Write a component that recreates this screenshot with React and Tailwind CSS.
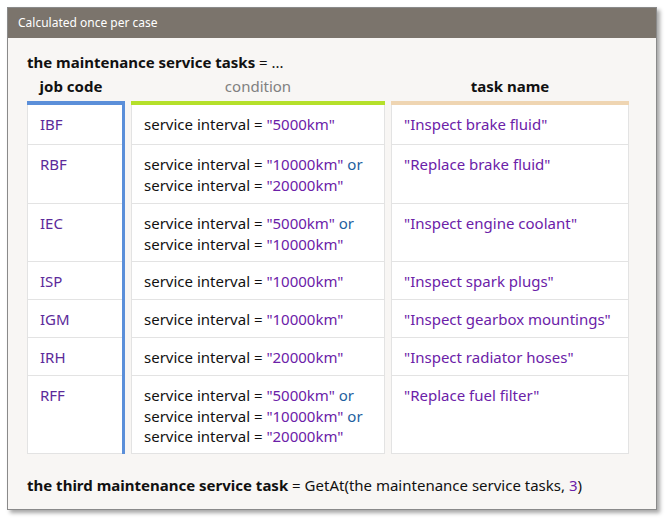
const rows = [
  { code: 'IBF', cond: ['5000km'], task: 'Inspect brake fluid', h: 'h-[40px]' },
  { code: 'RBF', cond: ['10000km', '20000km'], task: 'Replace brake fluid', h: 'h-[59px]' },
  { code: 'IEC', cond: ['5000km', '10000km'], task: 'Inspect engine coolant', h: 'h-[58px]' },
  { code: 'ISP', cond: ['10000km'], task: 'Inspect spark plugs', h: 'h-[38px]' },
  { code: 'IGM', cond: ['10000km'], task: 'Inspect gearbox mountings', h: 'h-[38px]' },
  { code: 'IRH', cond: ['20000km'], task: 'Inspect radiator hoses', h: 'h-[38px]' },
  { code: 'RFF', cond: ['5000km', '10000km', '20000km'], task: 'Replace fuel filter', h: 'h-[78px]' },
]

const Str = ({ children }) => <span className="text-[#6b21a8]">"{children}"</span>

export default function App() {
  return (
    <div className="w-[667px] h-[523px] bg-white pt-[7px] pl-[7px] font-['Noto_Sans',sans-serif]">
      <div className="w-[650px] h-[503px] border border-[#8a8a8a] bg-[#f8f6f4] shadow-[3px_3px_4px_rgba(0,0,0,0.35)]">
        <div className="h-[30px] bg-[#7b746c] text-white text-[12px] pl-[10px] flex items-center">Calculated once per case</div>
        <div className="pl-[19px] pt-[13px] text-[15px] text-[#111]">
          <div className="leading-[22px]"><b>the maintenance service tasks</b> = ...</div>
          <div className="flex gap-[6px] mt-[3px]">
            <div className="w-[98px] text-center font-bold leading-[20px] pr-[10px]">job code</div>
            <div className="w-[254px] text-center text-[#808080] leading-[20px]">condition</div>
            <div className="w-[238px] text-center font-bold leading-[20px]">task name</div>
          </div>
          <div className="flex gap-[6px] mt-[5px]">
            <div className="w-[98px] h-[4px] bg-[#5b8fd9]" />
            <div className="w-[254px] h-[4px] bg-[#b5e02a]" />
            <div className="w-[238px] h-[4px] bg-[#efd5b2]" />
          </div>
          <div className="flex">
            <div className="w-[98px] border-r-[3px] border-[#5b8fd9]">
              {rows.map((r) => (
                <div key={r.code} className={`${r.h} bg-white border-l border-b border-[#e3e3e3] pl-[12px] pt-[9px] leading-[20px] text-[#5b2a9a]`}>{r.code}</div>
              ))}
            </div>
            <div className="w-[6px]" />
            <div className="w-[254px]">
              {rows.map((r) => (
                <div key={r.code} className={`${r.h} bg-white border-x border-b border-[#e3e3e3] pl-[12px] pt-[9px] leading-[20.5px]`}>
                  {r.cond.map((c, i) => (
                    <div key={c}>service interval = <Str>{c}</Str>{i < r.cond.length - 1 && <span className="text-[#1e5fa0]"> or</span>}</div>
                  ))}
                </div>
              ))}
            </div>
            <div className="w-[6px]" />
            <div className="w-[238px]">
              {rows.map((r) => (
                <div key={r.code} className={`${r.h} bg-white border-x border-b border-[#e3e3e3] pl-[12px] pt-[9px] leading-[20px]`}><Str>{r.task}</Str></div>
              ))}
            </div>
          </div>
          <div className="mt-[21px] leading-[20px]"><b>the third maintenance service task</b> = GetAt(the maintenance service tasks, <span className="text-[#6b21a8]">3</span>)</div>
        </div>
      </div>
    </div>
  )
}
